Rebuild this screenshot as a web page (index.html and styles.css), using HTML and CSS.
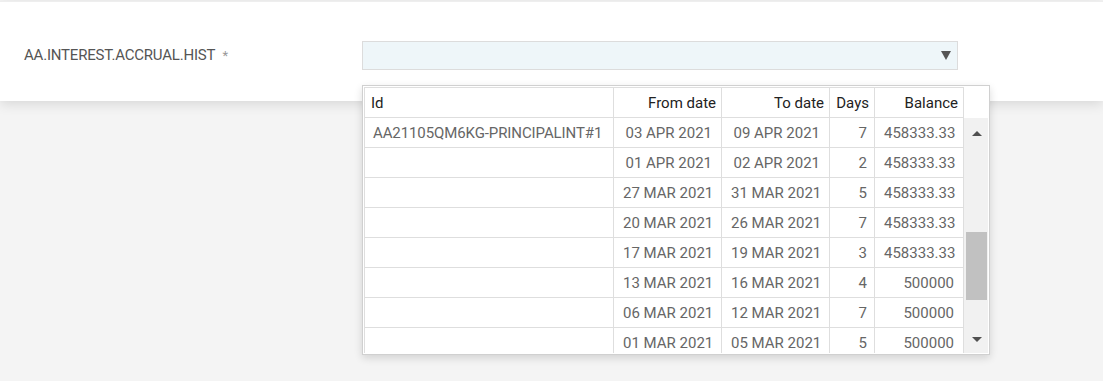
FILE: index.html
```html
<!DOCTYPE html>
<html lang="en">
<head>
    <meta charset="UTF-8">
    <title>AA.INTEREST.ACCRUAL.HIST</title>
    <link rel="stylesheet" href="styles.css">
</head>
<body>
    <div class="panel">
        <div class="field">
            <label class="field-label">AA.INTEREST.ACCRUAL.HIST <span class="req">*</span></label>
            <div class="select-wrap">
                <div class="select-box">
                    <span class="caret"></span>
                </div>
                <!-- lookup popup -->
                <div class="lookup">
                    <table class="grid grid-head">
                        <colgroup>
                            <col class="c-id"><col class="c-date"><col class="c-date"><col class="c-days"><col class="c-bal"><col class="c-sb">
                        </colgroup>
                        <tr>
                            <th class="left">Id</th>
                            <th>From date</th>
                            <th>To date</th>
                            <th>Days</th>
                            <th>Balance</th>
                            <th class="blank"></th>
                        </tr>
                    </table>
                    <div class="grid-body">
                        <table class="grid">
                            <colgroup>
                                <col class="c-id"><col class="c-date"><col class="c-date"><col class="c-days"><col class="c-bal">
                            </colgroup>
                            <tr><td class="left">AA21105QM6KG-PRINCIPALINT#1</td><td>03 APR 2021</td><td>09 APR 2021</td><td class="days">7</td><td>458333.33</td></tr>
                            <tr><td class="left"></td><td>01 APR 2021</td><td>02 APR 2021</td><td class="days">2</td><td>458333.33</td></tr>
                            <tr><td class="left"></td><td>27 MAR 2021</td><td>31 MAR 2021</td><td class="days">5</td><td>458333.33</td></tr>
                            <tr><td class="left"></td><td>20 MAR 2021</td><td>26 MAR 2021</td><td class="days">7</td><td>458333.33</td></tr>
                            <tr><td class="left"></td><td>17 MAR 2021</td><td>19 MAR 2021</td><td class="days">3</td><td>458333.33</td></tr>
                            <tr><td class="left"></td><td>13 MAR 2021</td><td>16 MAR 2021</td><td class="days">4</td><td>500000</td></tr>
                            <tr><td class="left"></td><td>06 MAR 2021</td><td>12 MAR 2021</td><td class="days">7</td><td>500000</td></tr>
                            <tr><td class="left"></td><td>01 MAR 2021</td><td>05 MAR 2021</td><td class="days">5</td><td>500000</td></tr>
                        </table>
                        <div class="scrollbar">
                            <span class="sb-up"></span>
                            <span class="sb-thumb"></span>
                            <span class="sb-down"></span>
                        </div>
                    </div>
                </div>
            </div>
        </div>
    </div>
</body>
</html>
```

FILE: styles.css
```css
/* page */
body, html {
    margin: 0;
    padding: 0;
    font-family: Roboto, "Liberation Sans", Arial, sans-serif;
}

body {
    background: #f4f4f4;
    height: 381px;
    overflow: hidden;
}

.panel {
    margin-top: 1px;
    border-top: 1px solid #eeeeee;
    background: #fff;
    height: 99px;
    box-shadow: 0 3px 12px rgba(0, 0, 0, 0.12);
}

.field {
    display: flex;
    align-items: flex-start;
    padding: 39px 0 0 24px;
}

.field-label {
    width: 338px;
    font-size: 15px;
    color: #555;
    line-height: 29px;
    letter-spacing: -0.2px;
}

.req {
    color: #999;
    margin-left: 4px;
    font-size: 13px;
}

.select-wrap {
    position: relative;
}

.select-box {
    width: 594px;
    height: 27px;
    background: #eef6f9;
    border: 1px solid #dcdcdc;
    display: flex;
    align-items: center;
    justify-content: flex-end;
}

.caret {
    width: 0;
    height: 0;
    border-left: 5px solid transparent;
    border-right: 5px solid transparent;
    border-top: 9px solid #555;
    margin-right: 6px;
}

/* lookup popup */
.lookup {
    position: absolute;
    top: 44px;
    left: 0;
    width: 624px;
    height: 266px;
    padding: 1px;
    background: #fff;
    border: 1px solid #d0d0d0;
    box-shadow: 0 3px 8px rgba(0, 0, 0, 0.14);
    overflow: hidden;
    z-index: 10;
}

.grid {
    border-collapse: collapse;
    table-layout: fixed;
    font-size: 15px;
}

.grid-head {
    width: 624px;
}

.c-id { width: 249px; }
.c-date { width: 108px; }
.c-days { width: 45px; }
.c-bal { width: 89px; }
.c-sb { width: 25px; }

.grid th {
    height: 29px;
    padding: 0 5px 0 6px;
    font-weight: normal;
    color: #222;
    text-align: right;
    white-space: nowrap;
    border: 1px solid #dedede;
}

.grid th.left {
    text-align: left;
}

.grid th.blank {
    border: none;
}

.grid-body {
    display: flex;
    height: 235px;
    overflow: hidden;
}

.grid-body .grid {
    width: 599px;
    flex: none;
}

.grid td {
    height: 29px;
    padding: 0 9px;
    color: #666;
    text-align: right;
    white-space: nowrap;
    border: 1px solid #dedede;
    border-top: none;
}

.grid td.left {
    text-align: left;
    padding-left: 8px;
    letter-spacing: -0.1px;
}

.grid td.days {
    padding-right: 7px;
}

.scrollbar {
    position: relative;
    width: 25px;
    background: #f1f1f1;
    flex: none;
}

.sb-up, .sb-down {
    position: absolute;
    left: 8px;
    width: 0;
    height: 0;
    border-left: 5px solid transparent;
    border-right: 5px solid transparent;
}

.sb-up {
    top: 13px;
    border-bottom: 5px solid #505050;
}

.sb-down {
    bottom: 11px;
    border-top: 5px solid #505050;
}

.sb-thumb {
    position: absolute;
    left: 2px;
    right: 2px;
    top: 114px;
    height: 68px;
    background: #c1c1c1;
}
```
